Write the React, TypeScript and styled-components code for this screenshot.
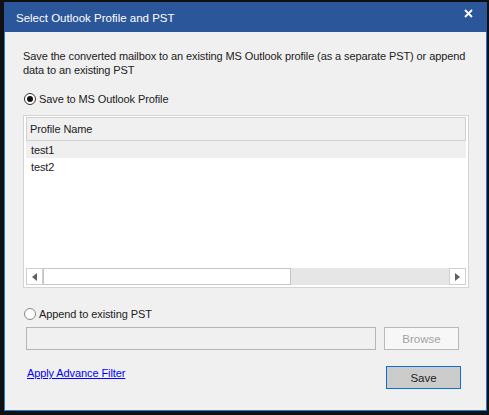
import React from "react";
import styled, { createGlobalStyle } from "styled-components";

const Global = createGlobalStyle`
  html, body {
    margin: 0;
    padding: 0;
    background: #101010;
    width: 489px;
    height: 415px;
    overflow: hidden;
  }
  * { box-sizing: border-box; }
`;

const Frame = styled.div`
  padding: 2px 2px 0 4px;
`;

const Window = styled.div`
  width: 483px;
  height: 409px;
  background: #f0f0f0;
  border: 1px solid #1a7fd4;
  border-top: none;
  display: flex;
  flex-direction: column;
  font-family: "Liberation Sans", Arial, sans-serif;
  font-size: 11px;
  letter-spacing: -0.1px;
  color: #222;
`;

const TitleBar = styled.header`
  height: 30px;
  margin: 0 -1px;
  background: #2b579a;
  color: #fff;
  display: flex;
  align-items: center;
  justify-content: space-between;
  padding: 2px 14px 0 12px;
  font-size: 11.5px;
  letter-spacing: 0;
`;

const Close = styled.span`
  display: flex;
  margin-top: -10px;
`;

const Body = styled.div`
  flex: 1;
  display: flex;
  flex-direction: column;
  padding: 17px 17px 0 18px;
`;

const Description = styled.p`
  margin: 0;
  line-height: 14px;
`;

const RadioRow = styled.label<{ top: number }>`
  display: flex;
  align-items: center;
  gap: 3px;
  margin-top: ${({ top }) => top}px;
  height: 16px;
  padding-left: 1px;
`;

const RadioDot = styled.span<{ checked?: boolean }>`
  width: 12px;
  height: 12px;
  border-radius: 50%;
  border: 1px solid ${({ checked }) => (checked ? "#333" : "#888")};
  background: #fff;
  display: flex;
  align-items: center;
  justify-content: center;
  &::after {
    content: "";
    width: 6px;
    height: 6px;
    border-radius: 50%;
    background: ${({ checked }) => (checked ? "#111" : "transparent")};
  }
`;

const Table = styled.div`
  margin-top: 8px;
  height: 173px;
  width: 446px;
  border: 1px solid #d4d4d4;
  background: #fff;
  padding: 1px 2px 2px 2px;
  display: flex;
  flex-direction: column;
`;

const HeaderRow = styled.div`
  height: 24px;
  background: #f0f0f0;
  border: 1px solid #d0d0d0;
  display: flex;
  align-items: center;
  padding-left: 3px;
`;

const Row = styled.div<{ selected?: boolean }>`
  height: 17px;
  display: flex;
  align-items: center;
  padding-left: 5px;
  background: ${({ selected }) => (selected ? "#efefef" : "#fff")};
`;

const Rows = styled.div`
  flex: 1;
`;

const ScrollBar = styled.div`
  height: 17px;
  display: flex;
  background: #e6e6e6;
`;

const ArrowBtn = styled.div`
  width: 17px;
  height: 17px;
  background: #fff;
  border: 1px solid #cfcfcf;
  display: flex;
  align-items: center;
  justify-content: center;
`;

const Thumb = styled.div`
  width: 248px;
  height: 17px;
  background: #fff;
  border: 1px solid #c4c4c4;
`;

const Track = styled.div`
  flex: 1;
`;

const PathRow = styled.div`
  display: flex;
  gap: 8px;
  margin-top: 5px;
  padding-left: 3px;
`;

const PathInput = styled.div`
  width: 350px;
  height: 23px;
  background: #f0f0f0;
  border: 1px solid #b5b5b5;
`;

const Button = styled.button<{ primary?: boolean }>`
  width: 75px;
  height: 23px;
  font: inherit;
  font-size: 11.5px;
  padding: 0;
  border: 1px solid ${({ primary }) => (primary ? "#0f6fce" : "#b9b9b9")};
  background: ${({ primary }) => (primary ? "#cccccc" : "#f7f7f7")};
  color: ${({ primary }) => (primary ? "#222" : "#a3a3a3")};
`;

const Footer = styled.div`
  display: flex;
  justify-content: space-between;
  align-items: flex-start;
  margin-top: 16px;
  padding-left: 4px;
  padding-right: 8px;
`;

const Link = styled.a`
  color: #0000ff;
  text-decoration: underline;
  margin-top: 1px;
  cursor: pointer;
`;

const Tri = ({ dir }: { dir: "l" | "r" }) => (
  <svg width="5" height="8" viewBox="0 0 5 8">
    <path d={dir === "l" ? "M5 0 L0 4 L5 8 Z" : "M0 0 L5 4 L0 8 Z"} fill="#606060" />
  </svg>
);

export default function App() {
  return (
    <Frame>
      <Global />
      <Window>
        <TitleBar>
          <span>Select Outlook Profile and PST</span>
          <Close>
            <svg width="9" height="9" viewBox="0 0 9 9">
              <path d="M1 1 L8 8 M8 1 L1 8" stroke="#fff" strokeWidth="1.8" />
            </svg>
          </Close>
        </TitleBar>
        <Body>
          <Description>
            Save the converted mailbox to an existing MS Outlook profile (as a separate PST) or append
            data to an existing PST
          </Description>
          <RadioRow top={14}>
            <RadioDot checked />
            Save to MS Outlook Profile
          </RadioRow>
          <Table>
            <HeaderRow>Profile Name</HeaderRow>
            <Rows>
              <Row selected>test1</Row>
              <Row>test2</Row>
            </Rows>
            <ScrollBar>
              <ArrowBtn>
                <Tri dir="l" />
              </ArrowBtn>
              <Thumb />
              <Track />
              <ArrowBtn>
                <Tri dir="r" />
              </ArrowBtn>
            </ScrollBar>
          </Table>
          <RadioRow top={18}>
            <RadioDot />
            Append to existing PST
          </RadioRow>
          <PathRow>
            <PathInput />
            <Button>Browse</Button>
          </PathRow>
          <Footer>
            <Link>Apply Advance Filter</Link>
            <Button primary>Save</Button>
          </Footer>
        </Body>
      </Window>
    </Frame>
  );
}
